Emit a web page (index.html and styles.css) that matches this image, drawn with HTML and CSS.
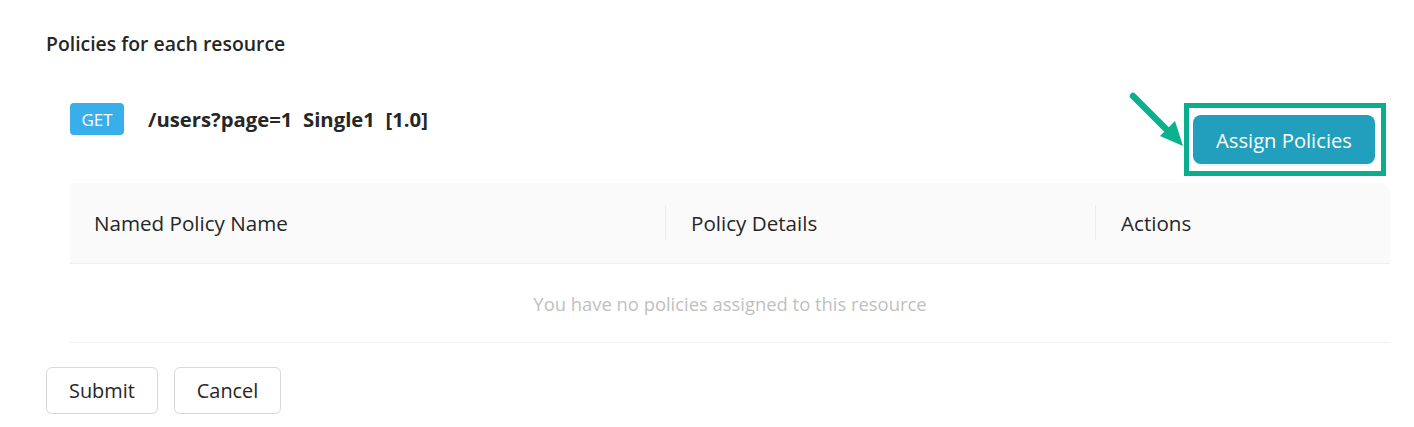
FILE: index.html
```html
<!DOCTYPE html>
<html lang="en">
<head>
<meta charset="utf-8">
<title>Policies</title>
<link rel="stylesheet" href="styles.css">
</head>
<body>
<div class="page">
  <h2 class="title">Policies for each resource</h2>
  <div class="resource-row">
    <div class="resource-info">
      <span class="method">GET</span>
      <span class="path">/users?page=1&nbsp;&nbsp;Single1&nbsp;&nbsp;[1.0]</span>
    </div>
    <div class="highlight">
      <button class="btn-primary">Assign Policies</button>
      <svg class="arrow" width="64" height="62" viewBox="0 0 64 62">
        <line x1="4" y1="4" x2="40" y2="40" stroke="#0bb08d" stroke-width="6.5" stroke-linecap="round"/>
        <polygon points="46,29 54,54 31,44" fill="#0bb08d"/>
      </svg>
    </div>
  </div>
  <div class="table">
    <div class="thead">
      <div class="th col1">Named Policy Name</div>
      <div class="th col2">Policy Details</div>
      <div class="th col3">Actions</div>
    </div>
    <div class="empty">You have no policies assigned to this resource</div>
  </div>
  <div class="actions">
    <button class="btn">Submit</button>
    <button class="btn">Cancel</button>
  </div>
</div>
</body>
</html>
```
FILE: styles.css
```css
* { box-sizing: border-box; }
html, body { margin: 0; padding: 0; background: #fff; }
body {
  font-family: "Open Sans", "Noto Sans", "Liberation Sans", sans-serif;
  color: #262626;
}
.page {
  padding: 31px 24px 0 46px;
}
.title {
  margin: 0;
  font-size: 19.4px;
  font-weight: 600;
  line-height: 26px;
  color: #262626;
}
.resource-row {
  margin-top: 46px;
  margin-left: 24px;
  display: flex;
  justify-content: space-between;
  align-items: flex-start;
}
.resource-info {
  display: flex;
  align-items: center;
  height: 32px;
}
.method {
  display: inline-flex;
  align-items: center;
  justify-content: center;
  width: 54px;
  height: 32px;
  background: #38aeea;
  color: #fff;
  border-radius: 4px;
  font-size: 17px;
}
.path {
  margin-left: 24px;
  font-size: 20.3px;
  font-weight: 700;
  color: #262626;
}
.highlight {
  position: relative;
  margin-right: 4px;
  border: 5px solid #0aae8c;
  padding: 7px 6px 7px 4px;
}
.arrow {
  position: absolute;
  left: -60px;
  top: -16px;
}
.btn-primary {
  display: block;
  width: 182px;
  height: 49px;
  border: none;
  border-radius: 8px;
  background: #219fbd;
  color: #fff;
  font-family: inherit;
  font-size: 20.2px;
  box-shadow: 0 2px 0 rgba(0,0,0,0.05);
}
.table {
  margin-top: 7px;
  margin-left: 24px;
}
.thead {
  display: flex;
  height: 81px;
  background: #fafafa;
  border-bottom: 1px solid #f0f0f0;
  border-top-right-radius: 10px;
}
.th {
  position: relative;
  display: flex;
  align-items: center;
  padding-left: 24px;
  font-size: 20.6px;
  color: #262626;
}
.th + .th { padding-left: 26px; }
.th + .th::before {
  content: "";
  position: absolute;
  left: 0;
  top: 22px;
  height: 35px;
  width: 1px;
  background: #ececec;
}
.col1 { width: 595px; }
.col2 { width: 430px; }
.col3 { flex: 1; }
.empty {
  height: 79px;
  display: flex;
  align-items: center;
  justify-content: center;
  border-bottom: 1px solid #f0f0f0;
  color: #bfbfbf;
  font-size: 18.4px;
}
.actions {
  margin-top: 24px;
  display: flex;
  gap: 16px;
}
.btn {
  height: 47px;
  padding: 0 22px;
  border: 1px solid #d9d9d9;
  border-radius: 6px;
  background: #fff;
  color: #262626;
  font-family: inherit;
  font-size: 19.9px;
  line-height: 45px;
  box-shadow: 0 2px 0 rgba(0,0,0,0.02);
}
```
